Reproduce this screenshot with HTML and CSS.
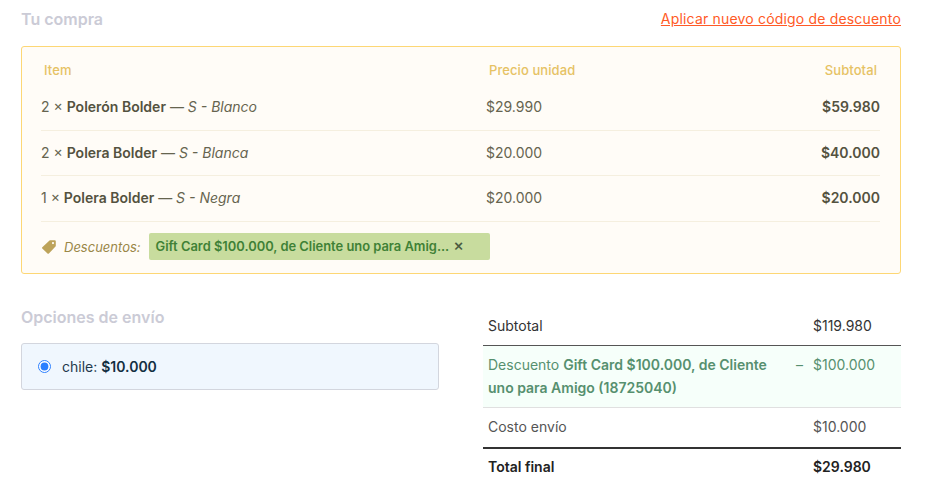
FILE: index.html
```html
<!DOCTYPE html>
<html lang="es">
<head>
  <meta charset="UTF-8">
  <title>Tu compra</title>
  <link rel="stylesheet" href="styles.css">
</head>
<body>
  <div class="encabezado">
    <h2>Tu compra</h2>
    <a class="link-codigo" href="#">Aplicar nuevo código de descuento</a>
  </div>

  <!-- Items de la compra -->
  <div class="caja-items">
    <div class="fila fila-titulos">
      <span>Item</span>
      <span>Precio unidad</span>
      <span class="derecha">Subtotal</span>
    </div>
    <div class="fila fila-primera">
      <span>2 × <strong>Polerón Bolder</strong> — <em>S - Blanco</em></span>
      <span>$29.990</span>
      <strong class="derecha">$59.980</strong>
    </div>
    <div class="fila">
      <span>2 × <strong>Polera Bolder</strong> — <em>S - Blanca</em></span>
      <span>$20.000</span>
      <strong class="derecha">$40.000</strong>
    </div>
    <div class="fila fila-ultima">
      <span>1 × <strong>Polera Bolder</strong> — <em>S - Negra</em></span>
      <span>$20.000</span>
      <strong class="derecha">$20.000</strong>
    </div>
    <div class="descuentos">
      <svg class="icono-tag" width="16" height="16" viewBox="0 0 16 16">
        <path d="M9.2 1.2h4.6a1 1 0 0 1 1 1v4.6a1 1 0 0 1-.3.7l-6.6 7a1 1 0 0 1-1.4 0L1.3 9.6a1 1 0 0 1 0-1.4l7.2-6.7a1 1 0 0 1 .7-.3zM12 3a1.1 1.1 0 1 0 0 2.2A1.1 1.1 0 0 0 12 3z" fill-rule="evenodd"/>
      </svg>
      <em>Descuentos:</em>
      <span class="cupon">Gift Card $100.000, de Cliente uno para Amig... <span class="cerrar">×</span></span>
    </div>
  </div>

  <div class="parte-baja">
    <div class="envio">
      <h2>Opciones de envío</h2>
      <label class="opcion">
        <input type="radio" name="envio" checked>
        <span>chile: <strong>$10.000</strong></span>
      </label>
    </div>

    <!-- Totales -->
    <div class="totales">
      <div class="total-fila total-subtotal">
        <span>Subtotal</span>
        <span></span>
        <span>$119.980</span>
      </div>
      <div class="total-fila total-descuento">
        <span>Descuento <strong>Gift Card $100.000, de Cliente uno para Amigo (18725040)</strong></span>
        <span>–</span>
        <span>$100.000</span>
      </div>
      <div class="total-fila total-envio">
        <span>Costo envío</span>
        <span></span>
        <span>$10.000</span>
      </div>
      <div class="total-fila total-final">
        <strong>Total final</strong>
        <span></span>
        <strong>$29.980</strong>
      </div>
    </div>
  </div>
</body>
</html>
```

FILE: styles.css
```css
body {
  font-family: Inter, "Liberation Sans", sans-serif;
  font-size: 14px;
  margin: 0;
  padding: 0 26px 0 21px;
  background: #ffffff;
  color: #333333;
}

h2 {
  font-size: 16px;
  font-weight: 600;
  line-height: 20px;
  margin: 0;
  color: #cbcbd6;
}

strong {
  font-weight: 600;
}

.encabezado {
  display: flex;
  justify-content: space-between;
  align-items: center;
  height: 46px;
  padding-bottom: 9px;
  box-sizing: border-box;
}

.link-codigo {
  color: #ff5a26;
  font-size: 14px;
  letter-spacing: 0.18px;
  text-decoration: underline;
}

.caja-items {
  border: 1px solid #fdd775;
  border-radius: 3px;
  background: #fffcf7;
  padding: 0 20px 0 19px;
  color: #66644f;
}

.fila {
  display: grid;
  grid-template-columns: 445px 1fr 120px;
  align-items: center;
  height: 45px;
  padding-bottom: 1px;
  border-bottom: 1px solid #f5efdf;
  box-sizing: border-box;
}

.fila strong {
  color: #54523f;
}

.fila .derecha {
  text-align: right;
}

.fila-titulos {
  height: 44px;
  padding: 1px 3px 0;
  border-bottom: none;
  font-size: 13px;
  letter-spacing: 0.08px;
  font-weight: 500;
  color: #e6c264;
}

.fila-primera {
  height: 40px;
  padding-bottom: 8px;
}

.fila-ultima {
  height: 46px;
  padding-bottom: 2px;
}

.descuentos {
  display: flex;
  align-items: center;
  height: 51px;
  padding-bottom: 2px;
  box-sizing: border-box;
  color: #9a8748;
  font-size: 13px;
}

.icono-tag {
  fill: #bda35a;
  margin-right: 7px;
}

.cupon {
  margin-left: 8px;
  width: 341px;
  box-sizing: border-box;
  padding: 0 7px;
  line-height: 27px;
  background: #c8dc9e;
  border-radius: 2px;
  color: #3f8136;
  font-size: 12.9px;
  font-weight: 600;
  white-space: nowrap;
}

.cerrar {
  color: #4a5a40;
  font-size: 16px;
  font-weight: 500;
  line-height: 1;
  margin-left: 1px;
}

.parte-baja {
  display: flex;
  justify-content: space-between;
  margin-top: 31px;
}

.envio {
  width: 418px;
  padding-top: 2px;
}

.opcion {
  display: flex;
  align-items: center;
  gap: 11px;
  height: 47px;
  margin-top: 16px;
  padding: 0 16px;
  box-sizing: border-box;
  background: #f0f7fe;
  border: 1px solid #d3d6de;
  border-radius: 3px;
  color: #1f3a4d;
}

.opcion input {
  margin: 0;
  width: 13px;
  height: 13px;
  accent-color: #2a7fff;
}

.opcion strong {
  color: #132f42;
}

.totales {
  width: 418px;
}

.total-fila {
  display: grid;
  grid-template-columns: 297px 28px 1fr;
  padding: 8px 5px;
  line-height: 23px;
  color: #333333;
}

.total-fila span:nth-child(2) {
  padding-right: 10px;
  text-align: right;
}

.total-subtotal {
  padding-top: 9px;
  padding-bottom: 8px;
  border-bottom: 1px solid #555555;
}

.total-descuento {
  padding-top: 7px;
  background: #f6fffa;
  border-bottom: 1px solid #e0e0e0;
  color: #56906f;
}

.total-envio {
  padding-top: 7px;
  padding-bottom: 9px;
  border-bottom: 2px solid #333333;
  color: #555555;
}

.total-final {
  padding-top: 6px;
  color: #222222;
}
```
